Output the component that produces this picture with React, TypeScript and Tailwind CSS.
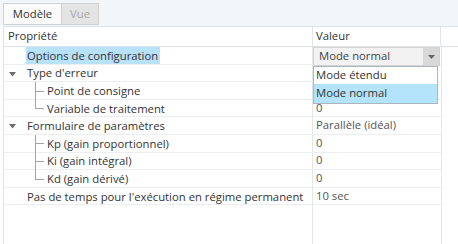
import React from 'react';

interface Row {
    label: string;
    value: string;
    level: 0 | 1;
    expander?: boolean;
    highlight?: boolean;
    // tree branch markers for children
    branch?: 'mid' | 'last';
}

const rows: Row[] = [
    { label: "Options de configuration", value: "", level: 0, highlight: true },
    { label: "Type d'erreur", value: "", level: 0, expander: true },
    { label: "Point de consigne", value: "", level: 1, branch: 'mid' },
    { label: "Variable de traitement", value: "0", level: 1, branch: 'last' },
    { label: "Formulaire de paramètres", value: "Parallèle (idéal)", level: 0, expander: true },
    { label: "Kp (gain proportionnel)", value: "0", level: 1, branch: 'mid' },
    { label: "Ki (gain intégral)", value: "0", level: 1, branch: 'mid' },
    { label: "Kd (gain dérivé)", value: "0", level: 1, branch: 'last' },
    { label: "Pas de temps pour l'exécution en régime permanent", value: "10 sec", level: 0 },
];

const Caret = () => (
    <svg width="7" height="5" viewBox="0 0 7 5" className="shrink-0">
        <path d="M0 0 L7 0 L3.5 4.5 Z" fill="#6b6b6b" />
    </svg>
);

export default function App() {
    return (
        <div
            className="w-[458px] h-[244px] overflow-hidden bg-white text-[11.3px] text-[#333] flex flex-col relative"
            style={{ fontFamily: '"Open Sans", "Noto Sans", sans-serif' }}
        >
            {/* Tabs */}
            <div className="h-[26px] bg-[#f3f6f8] flex items-end pl-[3px] pb-[1px] shrink-0">
                <div className="h-[22px] w-[59px] flex items-center justify-center bg-[#fbfbfb] border border-[#cfd3d6] text-[#333]">
                    Modèle
                </div>
                <div className="h-[22px] w-[37px] flex items-center justify-center bg-[#e4e4e4] border border-l-0 border-[#d2d2d2] text-[#a8a8a8]">
                    Vue
                </div>
            </div>

            {/* Header */}
            <div className="h-[21px] flex border-t border-b border-[#dfe3e6] shrink-0 ml-[3px] border-l">
                <div className="w-[308px] pl-[4px] flex items-center">Propriété</div>
                <div className="w-[128px] pl-[3px] flex items-center border-l border-[#e3e6e8]">Valeur</div>
                <div className="flex-1 border-l border-[#e3e6e8]" />
            </div>

            {/* Body */}
            <div className="flex-1 flex ml-[3px] border-l border-[#dfe3e6]">
                <div className="w-[437px] flex flex-col">
                    {rows.map((r, i) => (
                        <div key={i} className="h-[17.6px] flex border-b border-[#eceff1]">
                            <div className="w-[308px] relative flex items-center">
                                {r.expander && (
                                    <div className="absolute left-[5px] top-[7px]">
                                        <Caret />
                                    </div>
                                )}
                                {r.level === 1 && (
                                    <>
                                        <div
                                            className={
                                                r.branch === 'last'
                                                    ? "absolute left-[31px] top-0 h-[9px] border-l border-[#a5a5a5]"
                                                    : "absolute left-[31px] top-0 h-[18px] border-l border-[#a5a5a5]"
                                            }
                                        />
                                        <div className="absolute left-[31px] top-[8.5px] w-[9px] border-t border-[#a5a5a5]" />
                                    </>
                                )}
                                <span
                                    className={
                                        r.level === 1
                                            ? "ml-[43px] leading-[17px]"
                                            : r.highlight
                                                ? "ml-[22px] pl-[1px] pr-[2px] leading-[17px] bg-[#b8e1fa]"
                                                : "ml-[23px] leading-[17px]"
                                    }
                                >
                                    {r.label}
                                </span>
                            </div>
                            <div className="w-[129px] pl-[3px] flex items-center border-l border-[#e3e6e8] text-[#555] whitespace-nowrap">
                                {r.value}
                            </div>
                        </div>
                    ))}
                    <div className="flex-1 flex">
                        <div className="w-[308px]" />
                        <div className="flex-1 border-l border-[#e3e6e8]" />
                    </div>
                </div>
                <div className="flex-1 border-l border-[#e3e6e8]" />
            </div>

            {/* Select overlay */}
            <div className="absolute left-[313px] top-[47px] w-[127px] h-[19px] flex bg-[#f2f2f2] border border-[#d4d4d4]">
                <div className="flex-1 pl-[5px] flex items-center text-[#444]">Mode normal</div>
                <div className="w-[16px] bg-[#d9d9d9] flex items-center justify-center">
                    <svg width="7" height="4" viewBox="0 0 7 4">
                        <path d="M0 0 L7 0 L3.5 4 Z" fill="#666" />
                    </svg>
                </div>
            </div>
            <div className="absolute left-[313px] top-[66px] w-[125px] flex flex-col bg-white border border-[#a9b6bf]">
                <div className="h-[17px] pl-[2px] flex items-center text-[#333]">Mode étendu</div>
                <div className="h-[19px] pl-[2px] flex items-center bg-[#b3e4fc] text-[#333]">Mode normal</div>
            </div>
        </div>
    );
}
